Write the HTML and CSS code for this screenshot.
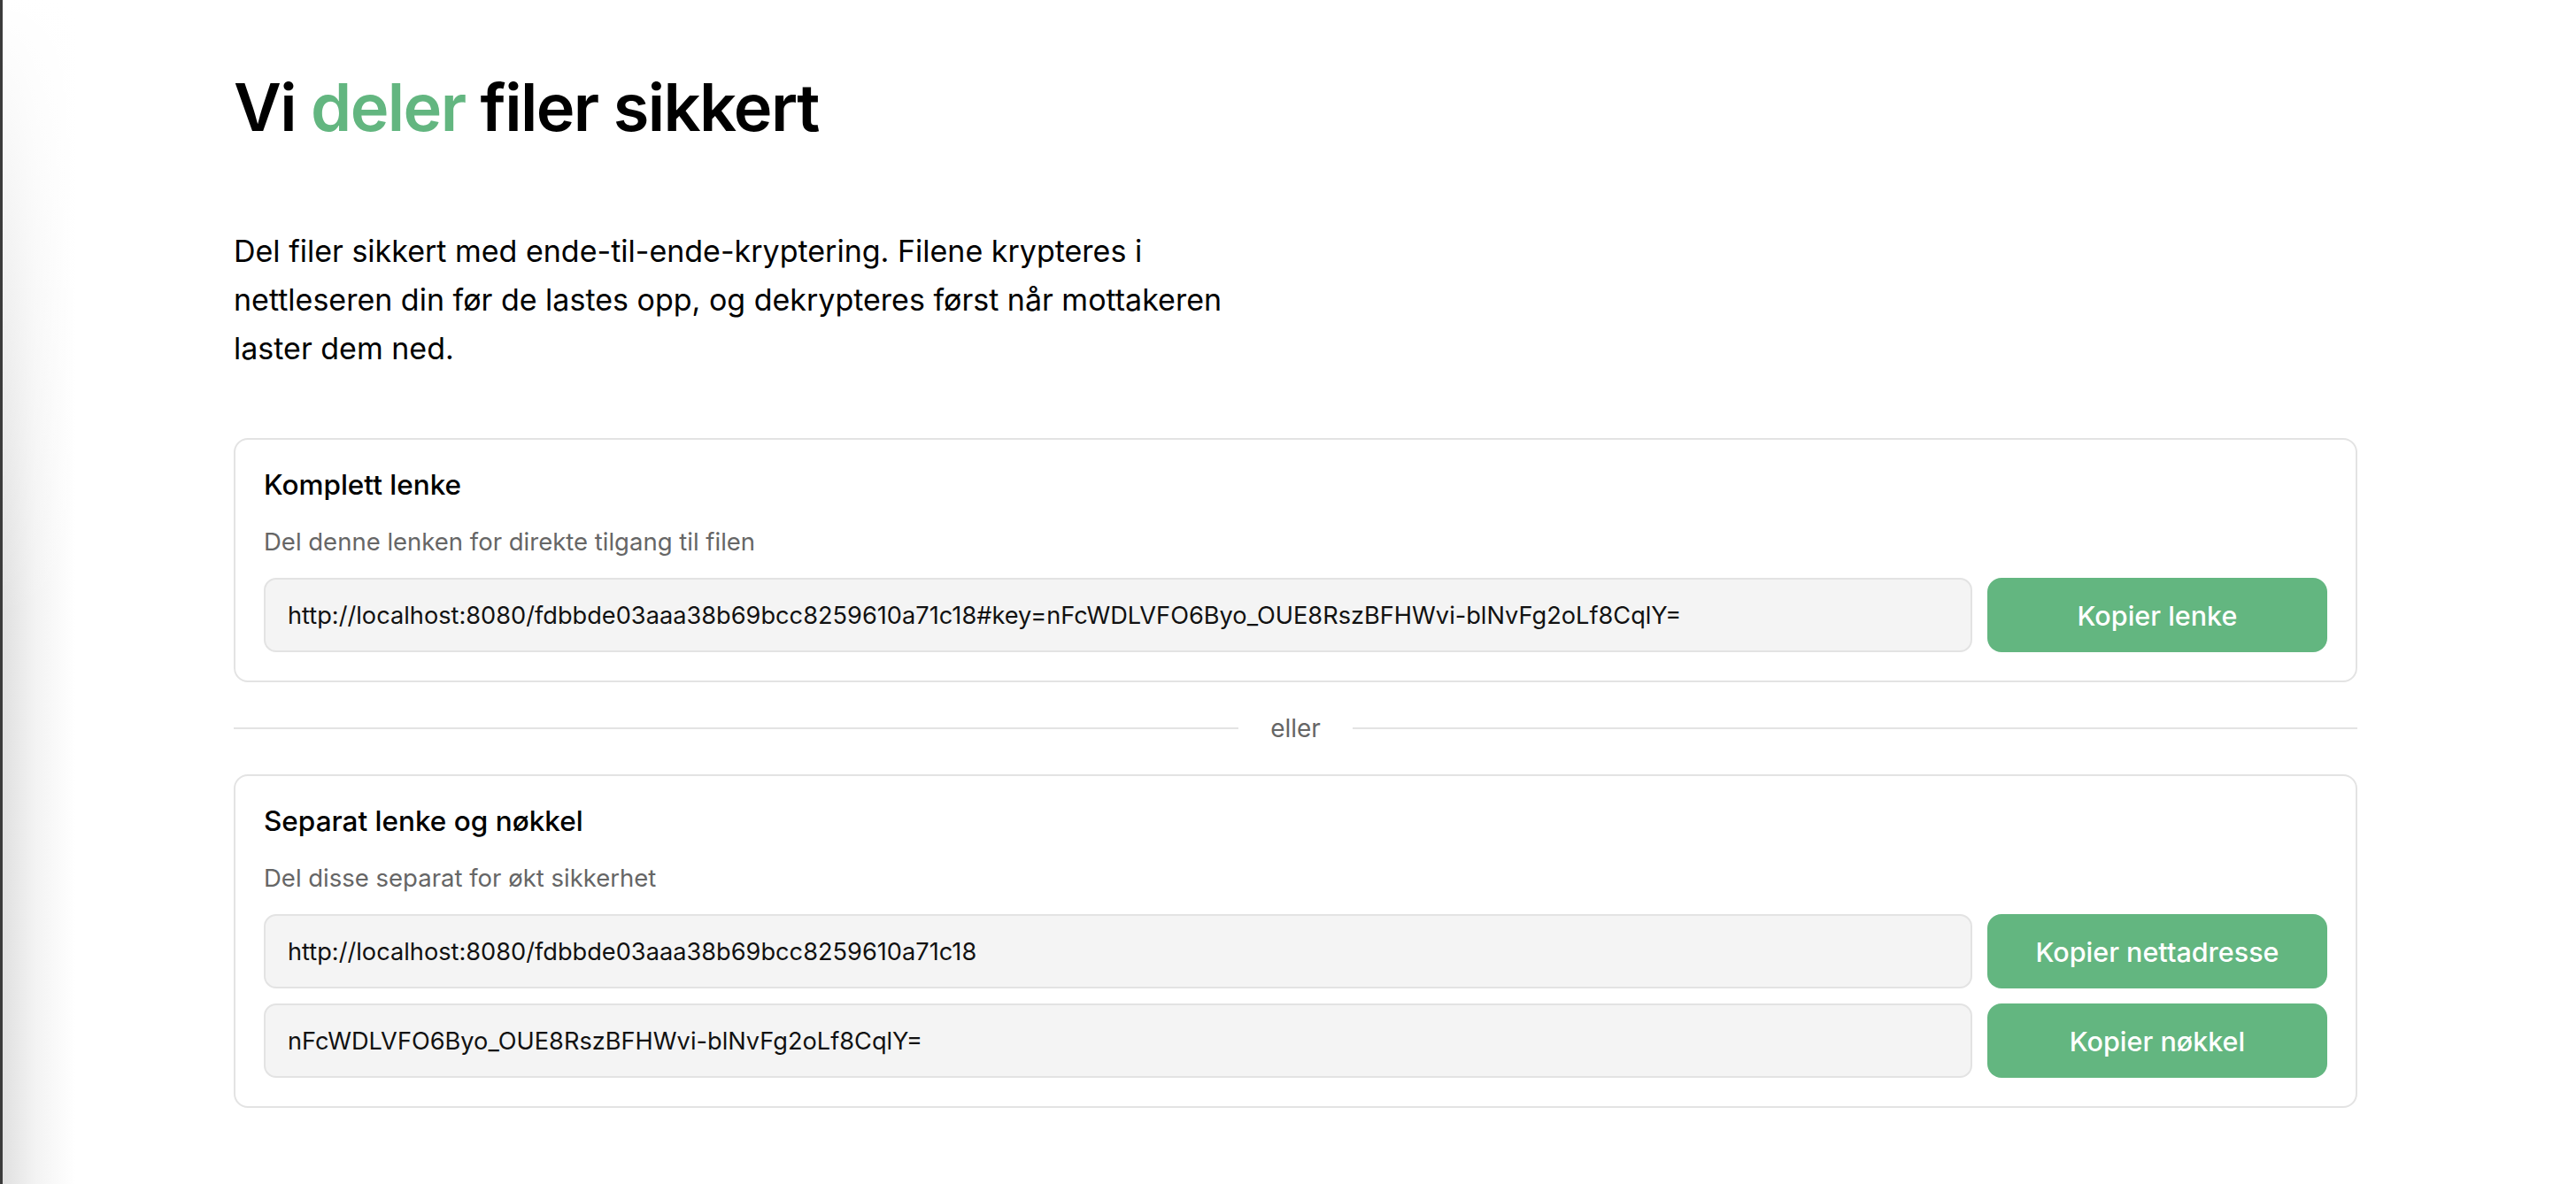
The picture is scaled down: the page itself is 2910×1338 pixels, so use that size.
FILE: index.html
```html
<!DOCTYPE html>
<html lang="no">
<head>
<meta charset="utf-8">
<title>Vi deler filer sikkert</title>
<link rel="stylesheet" href="styles.css">
</head>
<body>
<main class="page">
  <h1 class="title">Vi <span class="accent">deler</span> filer sikkert</h1>
  <p class="lead">Del filer sikkert med ende-til-ende-kryptering. Filene krypteres i nettleseren din før de lastes opp, og dekrypteres først når mottakeren laster dem ned.</p>

  <section class="card">
    <h2 class="card-title">Komplett lenke</h2>
    <p class="card-sub">Del denne lenken for direkte tilgang til filen</p>
    <div class="rows">
      <div class="row">
        <input class="field" type="text" readonly value="http://localhost:8080/fdbbde03aaa38b69bcc8259610a71c18#key=nFcWDLVFO6Byo_OUE8RszBFHWvi-blNvFg2oLf8CqlY=">
        <button class="btn" type="button">Kopier lenke</button>
      </div>
    </div>
  </section>

  <div class="divider"><span class="line"></span><span class="divider-text">eller</span><span class="line"></span></div>

  <section class="card">
    <h2 class="card-title">Separat lenke og nøkkel</h2>
    <p class="card-sub">Del disse separat for økt sikkerhet</p>
    <div class="rows">
      <div class="row">
        <input class="field" type="text" readonly value="http://localhost:8080/fdbbde03aaa38b69bcc8259610a71c18">
        <button class="btn" type="button">Kopier nettadresse</button>
      </div>
      <div class="row">
        <input class="field" type="text" readonly value="nFcWDLVFO6Byo_OUE8RszBFHWvi-blNvFg2oLf8CqlY=">
        <button class="btn" type="button">Kopier nøkkel</button>
      </div>
    </div>
  </section>
</main>
</body>
</html>
```
FILE: styles.css
```css
html, body {
  margin: 0;
  padding: 0;
}

body {
  min-height: 1338px;
  font-family: Inter, "Noto Sans", "Liberation Sans", sans-serif;
  color: #000;
  background:
    linear-gradient(to right, #3b3b3b 0, #3b3b3b 3px, transparent 3px),
    linear-gradient(to bottom, #fff 0, rgba(255,255,255,0.6) 250px, rgba(255,255,255,0) 700px),
    linear-gradient(to right, #e0e0e0 3px, #f3f3f3 40px, #fff 85px);
  background-repeat: no-repeat;
}

.page {
  width: 2399px;
  margin-left: 264px;
  padding-top: 73px;
}

.title {
  margin: 0;
  font-size: 74px;
  line-height: 97px;
  font-weight: 600;
  letter-spacing: -1.6px;
  color: #000;
}

.accent {
  color: #63b680;
}

.lead {
  margin: 86px 0 74px;
  max-width: 1170px;
  font-size: 34px;
  line-height: 55px;
  color: #000;
}

.card {
  border: 2px solid #e3e3e3;
  border-radius: 16px;
  padding: 32px;
  background: #fff;
}

.card-title {
  margin: 0 0 29px;
  font-size: 31.5px;
  line-height: 38px;
  font-weight: 500;
}

.card-sub {
  margin: 0 0 24px;
  font-size: 27.5px;
  line-height: 33px;
  color: #666;
}

.rows {
  display: flex;
  flex-direction: column;
  gap: 17px;
}

.row {
  display: flex;
  gap: 17px;
}

.field {
  flex: 1;
  min-width: 0;
  box-sizing: border-box;
  height: 84px;
  margin: 0;
  padding: 0 25px;
  background: #f4f4f4;
  border: 2px solid #e3e3e3;
  border-radius: 14px;
  font-family: Inter, "Noto Sans", "Liberation Sans", sans-serif;
  font-size: 27.2px;
  color: #111;
  outline: none;
}

.btn {
  flex: 0 0 384px;
  height: 84px;
  margin: 0;
  border: none;
  border-radius: 16px;
  background: #63b680;
  color: #fff;
  font-family: Inter, "Noto Sans", "Liberation Sans", sans-serif;
  font-size: 30.5px;
  font-weight: 500;
  cursor: pointer;
}

.divider {
  display: flex;
  align-items: center;
  gap: 36px;
  margin: 32px 0;
}

.line {
  flex: 1;
  height: 2px;
  background: #e3e3e3;
}

.divider-text {
  font-size: 28px;
  line-height: 40px;
  color: #666;
}
```
